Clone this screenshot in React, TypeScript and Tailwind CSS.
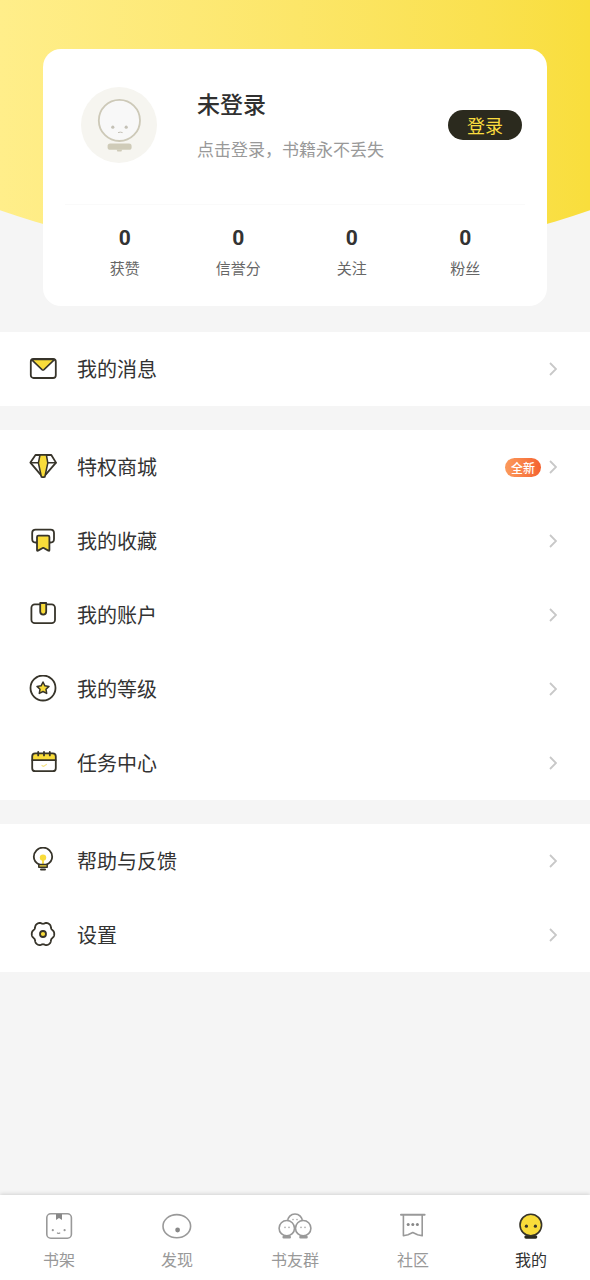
import React, { type ReactNode } from "react";
import { clsx } from "clsx";

interface MenuItem {
  label: string;
  icon: ReactNode;
  badge?: string;
}

interface TabItem {
  label: string;
  icon: ReactNode;
  active?: boolean;
}

const INK = "#37342a";
const YELLOW = "#f9dc3a";

// six soft lobes around the centre
const GEAR_PATH =
  Array.from({ length: 120 }, (_, i) => {
    const a = (i / 120) * Math.PI * 2;
    const r = 10.6 + 0.8 * Math.cos(6 * a) - 0.15 * Math.cos(12 * a);
    const x = (14 + r * Math.cos(a)).toFixed(2);
    const y = (13 + 1.06 * r * Math.sin(a)).toFixed(2);
    return `${i === 0 ? "M" : "L"}${x} ${y}`;
  }).join("") + "Z";

function MenuIcon({ children }: { children: ReactNode }) {
  return (
    <svg
      viewBox="0 0 28 28"
      className="size-7 shrink-0"
      fill="none"
      stroke={INK}
      strokeWidth="1.8"
      strokeLinejoin="round"
      strokeLinecap="round"
      aria-hidden="true"
    >
      {children}
    </svg>
  );
}

function TabIcon({ children }: { children: ReactNode }) {
  return (
    <svg
      viewBox="-4 0 36 28"
      className="h-7 w-9"
      fill="none"
      stroke="#999"
      strokeWidth="1.6"
      strokeLinejoin="round"
      strokeLinecap="round"
      aria-hidden="true"
    >
      {children}
    </svg>
  );
}

const MENU_GROUPS: MenuItem[][] = [
  [
    {
      label: "我的消息",
      icon: (
        <MenuIcon>
          <path d="M2.6 4.6H25.4L15 14.6q-1 .8-2 0Z" fill={YELLOW} strokeWidth="1.5" />
          <rect x="1.8" y="4" width="25" height="19" rx="2.8" />
        </MenuIcon>
      ),
    },
  ],
  [
    {
      label: "特权商城",
      badge: "全新",
      icon: (
        <MenuIcon>
          <path d="M6.5 2H22.3L27 9.6 14.5 24.2H13.7L1.4 9.6Z" />
          <path d="M1.8 9.8H27" strokeWidth="1.4" />
          <path d="M11 2H17.4L18.8 10 15.8 24H12.4L9.4 10Z" fill={YELLOW} strokeWidth="1.5" />
        </MenuIcon>
      ),
    },
    {
      label: "我的收藏",
      icon: (
        <MenuIcon>
          <path d="M8 15.5H6.6Q3.2 15.5 3.2 12V6Q3.2 2.6 6.6 2.6H21.6Q25 2.6 25 6V12Q25 15.5 21.6 15.5H20.4" />
          <path d="M8 23V10Q8 8.6 9.4 8.6H19Q20.4 8.6 20.4 10V23Q20.4 24.2 19.4 23.6L14.2 20.8 9 23.6Q8 24.2 8 23Z" fill={YELLOW} />
        </MenuIcon>
      ),
    },
    {
      label: "我的账户",
      icon: (
        <MenuIcon>
          <rect x="2.4" y="3.4" width="23.6" height="18.8" rx="3.4" />
          <path d="M11.2 2H17.2V10.6a3 3 0 0 1-6 0Z" fill={YELLOW} />
        </MenuIcon>
      ),
    },
    {
      label: "我的等级",
      icon: (
        <MenuIcon>
          <circle cx="14" cy="13" r="12.5" />
          <path
            d="M14 7l1.9 3.8 4.1.6-3 2.9.7 4.1-3.7-1.9-3.7 1.9.7-4.1-3-2.9 4.1-.6Z"
            fill={YELLOW}
            strokeWidth="1.5"
          />
        </MenuIcon>
      ),
    },
    {
      label: "任务中心",
      icon: (
        <MenuIcon>
          <path d="M3.2 11V7.4Q3.2 4.4 6.2 4.4H24Q27 4.4 27 7.4V11Z" fill={YELLOW} stroke="none" />
          <rect x="3.2" y="4.4" width="23.6" height="17.8" rx="3" />
          <path d="M3.4 11.2H26.6M9.2 3V6.4M15 3V6.4M20.8 3V6.4" />
          <path d="M13 16.4l1.4 1 3-2" stroke="#f7e58a" strokeWidth="1.2" />
        </MenuIcon>
      ),
    },
  ],
  [
    {
      label: "帮助与反馈",
      icon: (
        <MenuIcon>
          <path d="M10.4 17.6C7.3 16.2 4.8 13.6 4.8 9.8a9.2 9.2 0 0 1 18.4 0C23.2 13.6 20.7 16.2 17.6 17.6" />
          <circle cx="14" cy="10.6" r="3.2" fill={YELLOW} stroke="none" />
          <path d="M14 12V16.6" stroke={YELLOW} />
          <path d="M9.8 17.4H18.2V20.2H9.8Z" fill={YELLOW} strokeWidth="1.5" />
          <path d="M12 22.6H16" strokeWidth="2" />
        </MenuIcon>
      ),
    },
    {
      label: "设置",
      icon: (
        <MenuIcon>
          <path d={GEAR_PATH} />
          <circle cx="14" cy="13" r="3" fill={YELLOW} />
        </MenuIcon>
      ),
    },
  ],
];

const STATS = [
  { label: "获赞", value: 0 },
  { label: "信誉分", value: 0 },
  { label: "关注", value: 0 },
  { label: "粉丝", value: 0 },
];

const TABS: TabItem[] = [
  {
    label: "书架",
    icon: (
      <TabIcon>
        <rect x="1.8" y="1.8" width="24.6" height="24.4" rx="4" />
        <path d="M11 2H17V8L14 6 11 8Z" fill="#888" stroke="none" />
        <g fill="#999" stroke="none">
          <circle cx="7.8" cy="18.2" r="1.1" />
          <circle cx="19.6" cy="18.2" r="1.1" />
        </g>
        <path d="M12.4 21q1.2.8 2.4 0" strokeWidth="1.2" />
      </TabIcon>
    ),
  },
  {
    label: "发现",
    icon: (
      <TabIcon>
        <ellipse cx="13.8" cy="14.2" rx="13.8" ry="11.6" />
        <circle cx="14.6" cy="18" r="2.4" fill="#888" stroke="none" />
      </TabIcon>
    ),
  },
  {
    label: "书友群",
    icon: (
      <TabIcon>
        <circle cx="14" cy="9.4" r="7.4" />
        <path d="M2.8 25.2H8.6M19.6 25.2H25.4" strokeWidth="2.8" />
        <circle cx="5.8" cy="16.2" r="7.7" fill="#fff" />
        <circle cx="22.2" cy="16.2" r="7.7" fill="#fff" />
        <g fill="#aaa" stroke="none">
          <circle cx="12" cy="7.6" r=".8" />
          <circle cx="16" cy="7.6" r=".8" />
          <circle cx="4" cy="15.4" r=".8" />
          <circle cx="8" cy="15.4" r=".8" />
          <circle cx="20" cy="15.4" r=".8" />
          <circle cx="24" cy="15.4" r=".8" />
        </g>
      </TabIcon>
    ),
  },
  {
    label: "社区",
    icon: (
      <TabIcon>
        <path d="M2 2.8H25.6" strokeWidth="2" />
        <path d="M4.4 3V23.8L9 22.8 13.8 20.6 18.6 22.8 23.2 23.8V3" />
        <g fill="#888" stroke="none">
          <circle cx="9.2" cy="12.6" r="1.5" />
          <circle cx="13.8" cy="12.6" r="1.5" />
          <circle cx="18.4" cy="12.6" r="1.5" />
        </g>
      </TabIcon>
    ),
  },
  {
    label: "我的",
    active: true,
    icon: (
      <TabIcon>
        <path d="M9 25H18.6" stroke="#2b2a1f" strokeWidth="3.4" />
        <circle cx="13.8" cy="13" r="10.8" fill={YELLOW} stroke={INK} />
        <g fill={INK} stroke="none">
          <circle cx="9.4" cy="14.2" r="1.6" />
          <circle cx="18.4" cy="14.2" r="1.6" />
        </g>
      </TabIcon>
    ),
  },
];

function Avatar() {
  return (
    <svg viewBox="0 0 76 76" className="size-[76px] shrink-0" fill="none" aria-hidden="true">
      <circle cx="38" cy="38" r="38" fill="#f6f5f0" />
      <circle cx="38.4" cy="33.4" r="20.6" fill="#f8f8f8" stroke="#cdc9b8" strokeWidth="1.8" />
      <g fill="#c4c1b6">
        <circle cx="31.8" cy="40.2" r="1.6" />
        <circle cx="45.2" cy="40.2" r="1.6" />
      </g>
      <path d="M37 45.6q2.4-.9 4.6 0" stroke="#c4c1b6" />
      <rect x="26.6" y="56.4" width="24" height="6.4" rx="2.6" fill="#cfcbb8" />
      <path d="M35.6 62.6h5.6l-.8 2h-4Z" fill="#cfcbb8" />
    </svg>
  );
}

function Chevron() {
  return (
    <svg viewBox="0 0 8 14" className="h-3.5 w-2 shrink-0" fill="none" aria-hidden="true">
      <path d="M1 1l6 6-6 6" stroke="#c8c8c8" strokeWidth="1.8" />
    </svg>
  );
}

function ProfileCard() {
  return (
    <section className="rounded-[18px] bg-white px-[22px] pb-[26px] pt-[38px]">
      <div className="flex items-center pb-[41px] pl-4 pr-[3px]">
        <Avatar />
        <div className="ml-10 flex-1">
          <h1 className="text-[23px] font-medium leading-8 text-[#303030]">未登录</h1>
          <p className="mt-4 text-[17px] leading-7 text-[#999]">点击登录，书籍永不丢失</p>
        </div>
        <button
          type="button"
          className="h-[30px] shrink-0 rounded-full bg-[#2b2a1e] px-[19px] text-[18px] leading-[30px] text-[#f9dc3f]"
        >
          登录
        </button>
      </div>
      <ul className="grid grid-cols-4 border-t border-[#fafafa] px-[3px] pt-[19px]">
        {STATS.map((stat) => (
          <li key={stat.label} className="flex flex-col items-center gap-1">
            <span className="font-[Roboto,sans-serif] text-[21px] font-bold leading-7 text-[#333]">
              {stat.value}
            </span>
            <span className="text-[15px] leading-6 text-[#666]">{stat.label}</span>
          </li>
        ))}
      </ul>
    </section>
  );
}

function MenuRow({ label, icon, badge }: MenuItem) {
  return (
    <li>
      <button type="button" className="flex h-[74px] w-full items-center pl-[29px] pr-[33px] text-left">
        {icon}
        <span className="ml-5 flex-1 text-[20px] leading-7 text-[#333]">{label}</span>
        {badge && (
          <span className="mr-2 rounded-full bg-linear-to-r from-[#fb9a5c] to-[#f4622f] px-[6px] text-[12px] font-medium leading-[19px] text-white">
            {badge}
          </span>
        )}
        <Chevron />
      </button>
    </li>
  );
}

export default function App() {
  return (
    <div className="flex min-h-screen flex-col bg-[#f5f5f5] font-['Noto_Sans_CJK_SC',sans-serif]">
      <header className="grid">
        <div className="col-start-1 row-start-1 bg-linear-to-r from-[#ffee8a] to-[#f9de3c] [clip-path:circle(900px_at_50%_-640px)]" />
        <div className="z-10 col-start-1 row-start-1 px-[43px] pb-[26px] pt-[49px]">
          <ProfileCard />
        </div>
      </header>

      <main className="flex flex-col gap-6 pb-6">
        {MENU_GROUPS.map((group) => (
          <ul key={group[0].label} className="bg-white">
            {group.map((item) => (
              <MenuRow key={item.label} {...item} />
            ))}
          </ul>
        ))}
      </main>

      <nav className="mt-auto grid grid-cols-5 bg-white pb-2 pt-[17px] shadow-[0_-1px_4px_rgba(0,0,0,0.14)]">
        {TABS.map((tab) => (
          <a
            key={tab.label}
            href="#"
            aria-current={tab.active ? "page" : undefined}
            className={clsx(
              "flex flex-col items-center gap-1.5 text-[16px] leading-[26px]",
              tab.active ? "text-[#333]" : "text-[#999]"
            )}
          >
            {tab.icon}
            {tab.label}
          </a>
        ))}
      </nav>
    </div>
  );
}
